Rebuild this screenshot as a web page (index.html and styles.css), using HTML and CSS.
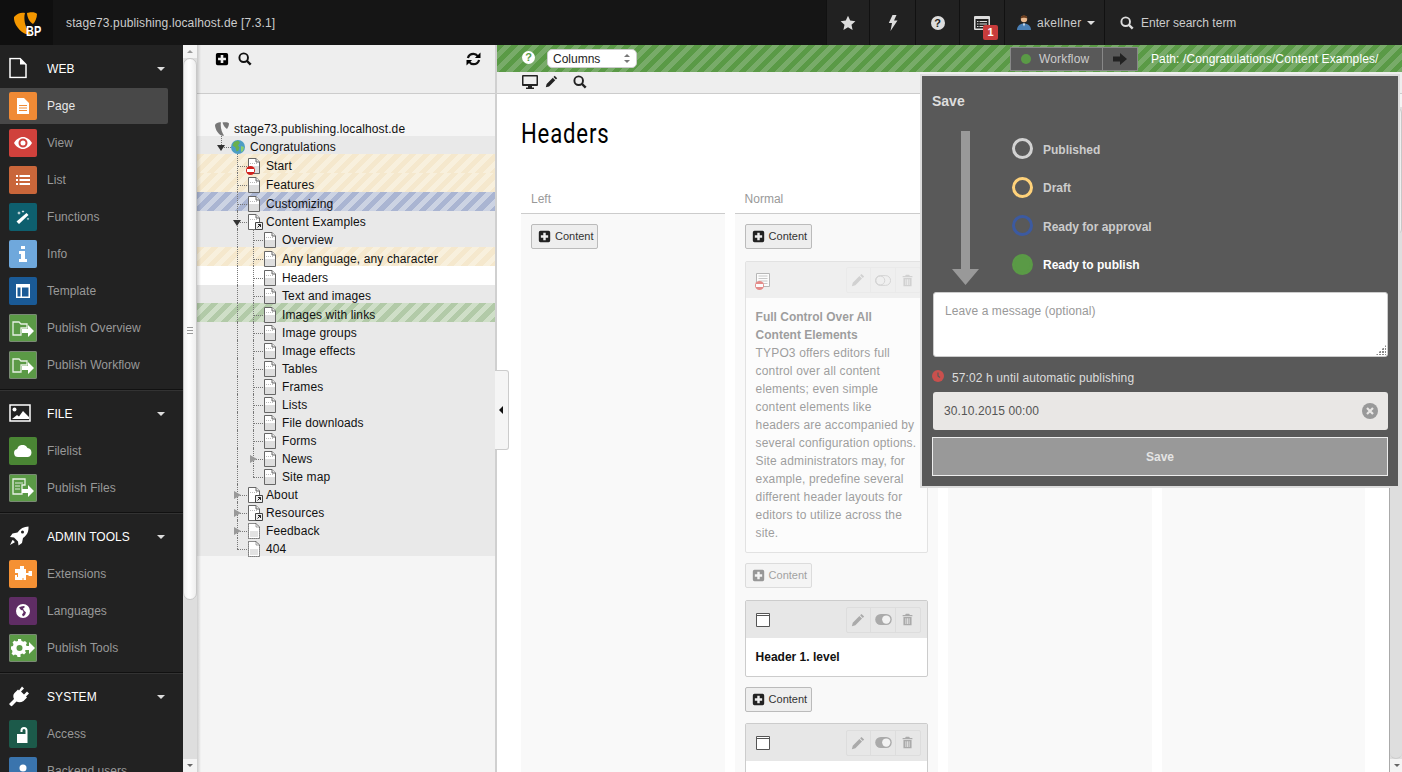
FILE: index.html
```html
<!DOCTYPE html>
<html lang="en">
<head>
  <meta charset="UTF-8">
  <title>TYPO3 publishing workflow</title>
  <link rel="stylesheet" href="styles.css">
</head>
<body>
  <!-- shared icons -->
  <svg class="defs" aria-hidden="true">
    <symbol id="i-plus" viewBox="0 0 16 16"><path fill-rule="evenodd" d="M3 1h10a2 2 0 012 2v10a2 2 0 01-2 2H3a2 2 0 01-2-2V3a2 2 0 012-2zM6.500 3.500v3h-3v3h3v3h3v-3h3v-3h-3v-3z"/></symbol>
    <symbol id="i-search" viewBox="0 0 16 16"><circle cx="6.500" cy="6.500" r="4.900" fill="none" stroke="currentColor" stroke-width="2.200"/><path d="M10 10l4.500 4.500" fill="none" stroke="currentColor" stroke-width="2.800"/></symbol>
    <symbol id="i-pencil" viewBox="0 0 16 16"><path d="M12 1l3 3-1.600 1.600-3-3zM9.600 3.400l3 3L5 14l-4 1 1-4z"/></symbol>
    <symbol id="i-trash" viewBox="0 0 16 16"><path fill-rule="evenodd" d="M6 1h4l1 1.500h3V4H2V2.500h3zM3 5h10v10H3zM5.500 6.500v7h1v-7zM7.500 6.500v7h1v-7zM9.500 6.500v7h1v-7z"/></symbol>
    <symbol id="i-toggle" viewBox="0 0 18 12"><rect x="0" y="0" width="18" height="12" rx="6"/><circle cx="12" cy="6" r="4.500" fill="#f2f2f2"/></symbol>
    <symbol id="i-toggle-off" viewBox="0 0 18 12"><rect x=".5" y=".5" width="17" height="11" rx="5.500" fill="none" stroke="currentColor"/><circle cx="6" cy="6" r="5" fill="none" stroke="currentColor"/></symbol>
    <symbol id="i-doc" viewBox="0 0 14 16"><path d="M1.500.5h7.500l3.500 3.500v11.500h-11z" fill="#fff" stroke="#666"/><path d="M2 8h10v7H2z" fill="#dedede"/><path d="M9 .5v3.500h3.500" fill="#eee" stroke="#666"/><path d="M3 5.500h8" stroke="#bbb" stroke-dasharray="1 1"/></symbol>
    <symbol id="i-doc-link" viewBox="0 0 16 16"><path d="M1.500.5h7.500l3.500 3.500v11.500h-11z" fill="#fff" stroke="#666"/><path d="M9 .5v3.500h3.500" fill="#eee" stroke="#666"/><path d="M3 5.500h8" stroke="#bbb" stroke-dasharray="1 1"/><path d="M8.500 8.500h7v7h-7z" fill="#eee" stroke="#444"/><path d="M10.500 13.500l3-3M11 10.500h2.500V13" fill="none" stroke="#222"/></symbol>
    <symbol id="i-doc-dotted" viewBox="0 0 14 16"><path d="M1.500.5h7.500l3.500 3.500v11.500h-11z" fill="#fff" stroke="#222" stroke-dasharray="1 1"/><path d="M3 8h8v6H3z" fill="#e2e2e2"/><path d="M9 .5v3.500h3.500" fill="none" stroke="#444" stroke-dasharray="1 1"/></symbol>
    <symbol id="i-publish" viewBox="0 0 28 28"><path d="M4 8h6l2 2h6v4h-6v7H4z" fill="none" stroke="#fff" stroke-width="1.300" opacity=".85"/><path d="M13 15h6v-4l6 6-6 6v-4h-6z" fill="#fff"/></symbol>
  </svg>

  <div class="app">
    <header class="topbar">
      <a class="logo">
        <svg class="logo-mark" viewBox="0 0 26 24" width="26" height="24"><path fill="#f49700" d="M0 5C3 1 8 0 11 1 9 8 12 18 17 22 11 25-1 14 0 5zM13 1c3-1 9-1 10 1 0 4-2 8-4 10-4-2-6-8-6-11z"/></svg>
        <span class="logo-text">BP</span>
      </a>
      <div class="site-name">stage73.publishing.localhost.de [7.3.1]</div>
      <nav class="toolbar">
        <a class="tool">
          <svg width="16" height="16" viewBox="0 0 16 16"><path fill="#ddd" d="M8 .8l2.200 4.800 5.200.6-3.900 3.500 1.100 5.200L8 12.300l-4.600 2.600 1.100-5.200L.6 6.200l5.200-.6z"/></svg>
        </a>
        <a class="tool">
          <svg width="10" height="16" viewBox="0 0 10 16"><path fill="#ddd" d="M4.500 0h4L6 5.500h3.500L2.500 16l1.500-8H.8z"/></svg>
        </a>
        <a class="tool"><span class="help">?</span></a>
        <a class="tool tool-notes">
          <svg width="16" height="14" viewBox="0 0 16 14"><path fill="#ddd" fill-rule="evenodd" d="M1 0h14a1 1 0 011 1v12a1 1 0 01-1 1H1a1 1 0 01-1-1V1a1 1 0 011-1zM1.500 3v9.500h13V3zM3 5h1.500v1H3zM5.500 5H13v1H5.500zM3 7.500h1.500v1H3zM5.500 7.500H13v1H5.500zM3 10h1.500v1H3zM5.500 10H13v1H5.500z"/></svg>
          <span class="badge">1</span>
        </a>
        <a class="tool tool-user">
          <svg width="14" height="16" viewBox="0 0 14 16"><circle cx="7" cy="4" r="3.200" fill="#e8b88f"/><path fill="#6b3d1e" d="M3.700 3.500C3.700 1 5.500.2 7 .2s3.300.8 3.300 3.300C9 2.500 5 2.500 3.700 3.500z"/><path fill="#4a7fb5" d="M0 15c0-4 3-6.500 7-6.500s7 2.500 7 6.500z"/><path fill="#fff" d="M6 8.500h2l-1 3z"/></svg>
          <span class="user-name">akellner</span>
          <i class="caret"></i>
        </a>
        <div class="search">
          <svg width="14" height="14" class="search-icon"><use href="#i-search"/></svg>
          <span>Enter search term</span>
        </div>
      </nav>
    </header>

    <div class="workspace">
      <aside class="modules">
        <section class="group">
          <div class="group-head">
            <svg class="group-icon" width="18" height="21" viewBox="0 0 18 21"><path d="M1 1h10l6 6v13H1z" fill="none" stroke="#fff" stroke-width="1.500"/><path d="M11 1v6h6" fill="#fff"/></svg>
            <span class="group-name">WEB</span><i class="caret"></i>
          </div>
          <a class="mod active">
            <span class="mod-icon c-page"><svg width="14" height="18" viewBox="0 0 14 18"><path fill="#fff" fill-rule="evenodd" d="M1 1h7l5 5v11H1zM3 8v1h8V8zM3 10.500v1h8v-1zM3 13v1h8v-1z"/></svg></span>Page
          </a>
          <a class="mod">
            <span class="mod-icon c-view"><svg width="18" height="12" viewBox="0 0 18 12"><path fill="#fff" fill-rule="evenodd" d="M0 6c2-3.500 5.500-6 9-6s7 2.500 9 6c-2 3.500-5.500 6-9 6S2 9.500 0 6zM9 1.500a4.500 4.500 0 100 9 4.500 4.500 0 000-9zM9 3.500a2.500 2.500 0 110 5 2.500 2.500 0 010-5z"/></svg></span>View
          </a>
          <a class="mod">
            <span class="mod-icon c-list"><svg width="14" height="10" viewBox="0 0 14 10"><path fill="#fff" d="M0 0h2v2H0zM3.500 0H14v2H3.500zM0 4h2v2H0zM3.500 4H14v2H3.500zM0 8h2v2H0zM3.500 8H14v2H3.500z"/></svg></span>List
          </a>
          <a class="mod">
            <span class="mod-icon c-func"><svg width="14" height="14" viewBox="0 0 14 14"><path fill="#fff" d="M10.500 3l2 2L3 14l-2.500-2.500zM3 1l.5 1.500L5 3l-1.500.5L3 5l-.5-1.500L1 3l1.500-.5zM7 0l.4 1L8.500 1.500 7.400 2 7 3l-.4-1L5.500 1.500 6.600 1zM12 7.500l.4 1 1 .4-1 .4-.4 1-.4-1-1-.4 1-.4z"/></svg></span>Functions
          </a>
          <a class="mod">
            <span class="mod-icon c-info"><svg width="8" height="16" viewBox="0 0 8 16"><path fill="#fff" d="M2 0h4v3H2zM0 5h6v8h2v3H0v-3h2V8H0z"/></svg></span>Info
          </a>
          <a class="mod">
            <span class="mod-icon c-template"><svg width="14" height="14" viewBox="0 0 14 14"><path fill="#fff" fill-rule="evenodd" d="M0 0h14v14H0zM1.500 3.500v9h3v-9zM6 3.500v9h6.500v-9z"/></svg></span>Template
          </a>
          <a class="mod">
            <span class="mod-icon c-publish"><svg width="28" height="28"><use href="#i-publish"/></svg></span>Publish Overview
          </a>
          <a class="mod">
            <span class="mod-icon c-publish"><svg width="28" height="28"><use href="#i-publish"/></svg></span>Publish Workflow
          </a>
        </section>

        <section class="group">
          <div class="group-head">
            <svg class="group-icon" width="22" height="18" viewBox="0 0 22 18"><path d="M1 1h20v16H1z" fill="none" stroke="#fff" stroke-width="1.500"/><circle cx="5.500" cy="5.500" r="2" fill="#fff"/><path d="M3 15l5-4 2 1.500L14 7l6 6v2z" fill="#fff"/></svg>
            <span class="group-name">FILE</span><i class="caret"></i>
          </div>
          <a class="mod">
            <span class="mod-icon c-filelist"><svg width="18" height="12" viewBox="0 0 18 12"><path fill="#fff" d="M4 12a4 4 0 01-.8-7.900A5.500 5.500 0 0113.500 3 4.600 4.600 0 0114 12z"/></svg></span>Filelist
          </a>
          <a class="mod">
            <span class="mod-icon c-publish"><svg width="28" height="28" viewBox="0 0 28 28"><path d="M4 5h12v6h-3v9H4z" fill="none" stroke="#fff" stroke-width="1.300" opacity=".85"/><path d="M6 9h8M6 12h5M6 15h5" stroke="#fff" opacity=".8"/><path d="M13 15h6v-4l6 6-6 6v-4h-6z" fill="#fff"/></svg></span>Publish Files
          </a>
        </section>

        <section class="group">
          <div class="group-head">
            <svg class="group-icon" width="20" height="20" viewBox="0 0 20 20"><path fill="#fff" fill-rule="evenodd" d="M19.500.5c.3 5-1.500 9-5.500 11.500l-1 5-3.500 2.500-.5-4-4-4-4-.5L3.500 7.500l5-1C11 2.500 15 .5 19.500.5zM13.500 4.500a1.500 1.500 0 100 3 1.500 1.500 0 000-3zM3.500 14c1 .3 2 1.300 2.300 2.300L1 19z"/></svg>
            <span class="group-name">ADMIN TOOLS</span><i class="caret"></i>
          </div>
          <a class="mod">
            <span class="mod-icon c-ext"><svg width="18" height="16" viewBox="0 0 18 16"><path fill="#fff" d="M6 3V0h4v3h2v4h2.500V5H18v5h-3.500V9H12v5h-2.500v-2h-1v2H1V9h2v2h1V7H1V3z"/></svg></span>Extensions
          </a>
          <a class="mod">
            <span class="mod-icon c-lang"><svg width="14" height="14" viewBox="0 0 14 14"><path fill="#fff" fill-rule="evenodd" d="M7 0a7 7 0 110 14A7 7 0 017 0zM3 3.500L5 6l2 .5.500 2-1.500 2 1 2 2-1.500 1-2.500-2-2-1-2 2-1.500-1-1-3 .5z"/></svg></span>Languages
          </a>
          <a class="mod">
            <span class="mod-icon c-publish"><svg width="24" height="20" viewBox="0 0 24 20"><path fill="#fff" fill-rule="evenodd" d="M7 1h3l.5 2 2 .8L14 3l2 2-1 1.500.5 1.500H18V4l6 6-6 6v-4h-3.500l-.5 1 1 1.500-2 2-1.500-1-2 .8L9.500 19h-3L6 17.300 4 16.500 2.500 17.500l-2-2 1-1.500L1 12l-1-.5v-3l2-.5.500-2L1.500 4.500l2-2L5 3.500 7 3zM8.500 7a3 3 0 100 6 3 3 0 000-6z"/></svg></span>Publish Tools
          </a>
        </section>

        <section class="group">
          <div class="group-head">
            <svg class="group-icon" width="21" height="21" viewBox="0 0 21 21"><path fill="#fff" d="M13 1l2 2-3 3 3 3 3-3 2 2-3 3 1 1-3.500 3.500C12 17 9.500 17 7.500 16L2.500 21 0 18.500l5-5C4 11.500 4 9 5.500 7.500L9 4l1 1z"/></svg>
            <span class="group-name">SYSTEM</span><i class="caret"></i>
          </div>
          <a class="mod">
            <span class="mod-icon c-access"><svg width="12" height="17" viewBox="0 0 12 17"><path fill="#fff" d="M0 8h10V4.500a1.500 1.500 0 10-3 0V6H5V4.500a3.500 3.500 0 017 0V8 17H0z" transform="translate(-1.500 0)"/></svg></span>Access
          </a>
          <a class="mod">
            <span class="mod-icon c-users"><svg width="14" height="14" viewBox="0 0 14 14"><circle cx="7" cy="4" r="3.500" fill="#fff"/><path fill="#fff" d="M0 14c0-4 3-6 7-6s7 2 7 6z"/></svg></span>Backend users
          </a>
        </section>
      </aside>

      <div class="scrollbar scrollbar-left">
        <span class="sb-up"></span>
        <span class="sb-thumb"><i class="grip"></i></span>
        <span class="sb-down"></span>
      </div>

      <section class="tree-pane">
        <div class="tree-tools">
          <svg width="14" height="14" class="tt"><use href="#i-plus"/></svg>
          <svg width="14" height="14" class="tt"><use href="#i-search"/></svg>
          <svg width="15" height="14" viewBox="0 0 16 15" class="tt tt-end"><path fill="none" stroke="#111" stroke-width="2.400" d="M2 6.500C2.800 3.500 5 2 8 2c2 0 3.500 1 4.500 2.500M14 8.500c-.8 3-3 4.500-6 4.500-2 0-3.500-1-4.500-2.500"/><path d="M15.500.5v6h-6zM.5 14.500v-6h6z"/></svg>
        </div>
        <div class="tree">
          <div class="row root">
            <svg class="page-icon" width="14" height="14" viewBox="0 0 14 14"><path fill="#777" d="M0 3C1 1 4 0 6 .5 5 5 7 11 9 13.500 5 15 0 8 0 3zM7.500.5c2-.5 6-.5 6.500 1 0 2-1 4-2 5.500-2-1-4-4.500-4.500-6.500z"/></svg>
            <span>stage73.publishing.localhost.de</span>
          </div>
          <div class="nodes">
            <div class="row">
              <span class="g stub"><i class="tog open"></i></span>
              <svg class="page-icon" width="14" height="14" viewBox="0 0 14 14"><circle cx="7" cy="7" r="7" fill="#4d9dc4"/><path fill="#6ab04c" d="M3 2l4-1.500 2 2-2 3 1.500 2-1 3-2 1-1-4-3-2z"/><path fill="#8ccf6e" d="M10 6l3 1-1 4-2 1z"/></svg>
              <span>Congratulations</span>
            </div>
            <div class="row tall orange"><span class="g tee"></span>
              <span class="icon-wrap"><svg class="page-icon" width="14" height="16"><use href="#i-doc"/></svg><i class="no-entry"></i></span><span>Start</span></div>
            <div class="row tall orange"><span class="g tee"></span><svg class="page-icon" width="14" height="16"><use href="#i-doc"/></svg><span>Features</span></div>
            <div class="row tall blue"><span class="g tee"></span><svg class="page-icon" width="14" height="16"><use href="#i-doc"/></svg><span>Customizing</span></div>
            <div class="row"><span class="g tee"><i class="tog open"></i></span><svg class="page-icon" width="16" height="16"><use href="#i-doc-link"/></svg><span class="after-link">Content Examples</span></div>
            <div class="row"><span class="g line"></span><span class="g tee"></span><svg class="page-icon" width="14" height="16"><use href="#i-doc"/></svg><span>Overview</span></div>
            <div class="row tall orange"><span class="g line"></span><span class="g tee"></span><svg class="page-icon" width="14" height="16"><use href="#i-doc"/></svg><span>Any language, any character</span></div>
            <div class="row tall current"><span class="g line"></span><span class="g tee"></span><svg class="page-icon" width="14" height="16"><use href="#i-doc"/></svg><span>Headers</span></div>
            <div class="row"><span class="g line"></span><span class="g tee"></span><svg class="page-icon" width="14" height="16"><use href="#i-doc"/></svg><span>Text and images</span></div>
            <div class="row tall green"><span class="g line"></span><span class="g tee"></span><svg class="page-icon" width="14" height="16"><use href="#i-doc"/></svg><span>Images with links</span></div>
            <div class="row"><span class="g line"></span><span class="g tee"></span><svg class="page-icon" width="14" height="16"><use href="#i-doc"/></svg><span>Image groups</span></div>
            <div class="row"><span class="g line"></span><span class="g tee"></span><svg class="page-icon" width="14" height="16"><use href="#i-doc"/></svg><span>Image effects</span></div>
            <div class="row"><span class="g line"></span><span class="g tee"></span><svg class="page-icon" width="14" height="16"><use href="#i-doc"/></svg><span>Tables</span></div>
            <div class="row"><span class="g line"></span><span class="g tee"></span><svg class="page-icon" width="14" height="16"><use href="#i-doc"/></svg><span>Frames</span></div>
            <div class="row"><span class="g line"></span><span class="g tee"></span><svg class="page-icon" width="14" height="16"><use href="#i-doc"/></svg><span>Lists</span></div>
            <div class="row"><span class="g line"></span><span class="g tee"></span><svg class="page-icon" width="14" height="16"><use href="#i-doc"/></svg><span>File downloads</span></div>
            <div class="row"><span class="g line"></span><span class="g tee"></span><svg class="page-icon" width="14" height="16"><use href="#i-doc"/></svg><span>Forms</span></div>
            <div class="row"><span class="g line"></span><span class="g tee"><i class="tog"></i></span><svg class="page-icon" width="14" height="16"><use href="#i-doc"/></svg><span>News</span></div>
            <div class="row"><span class="g line"></span><span class="g end"></span><svg class="page-icon" width="14" height="16"><use href="#i-doc"/></svg><span>Site map</span></div>
            <div class="row"><span class="g tee"><i class="tog"></i></span><svg class="page-icon" width="16" height="16"><use href="#i-doc-link"/></svg><span class="after-link">About</span></div>
            <div class="row"><span class="g tee"><i class="tog"></i></span><svg class="page-icon" width="16" height="16"><use href="#i-doc-link"/></svg><span class="after-link">Resources</span></div>
            <div class="row"><span class="g tee"><i class="tog"></i></span><svg class="page-icon" width="14" height="16"><use href="#i-doc-dotted"/></svg><span>Feedback</span></div>
            <div class="row"><span class="g end"></span><svg class="page-icon" width="14" height="16"><use href="#i-doc-dotted"/></svg><span>404</span></div>
          </div>
        </div>
        <div class="collapse-handle"><i></i></div>
      </section>

      <main class="content">
        <div class="workflow-bar">
          <span class="help help-small">?</span>
          <div class="select"><span>Columns</span><i class="spin"></i></div>
          <div class="wf-right">
            <div class="wf-button">
              <span class="wf-label"><i class="dot"></i>Workflow</span>
              <span class="wf-arrow"><svg width="14" height="12" viewBox="0 0 14 12"><path fill="#222" d="M0 3.500h7V0l7 6-7 6V8.500H0z"/></svg></span>
            </div>
            <div class="wf-path">Path: /Congratulations/Content Examples/</div>
          </div>
        </div>
        <div class="doc-tools">
          <svg width="16" height="14" viewBox="0 0 16 14"><path fill="#222" fill-rule="evenodd" d="M1 0h14a1 1 0 011 1v9a1 1 0 01-1 1h-5v1.500h2V14H4v-1.500h2V11H1a1 1 0 01-1-1V1a1 1 0 011-1zM1.500 1.500v7.500h13V1.500z"/></svg>
          <svg width="13" height="13" class="dt-pencil"><use href="#i-pencil"/></svg>
          <svg width="14" height="14" class="dt-search"><use href="#i-search"/></svg>
        </div>

        <div class="doc-body">
          <div class="doc">
            <h1>Headers</h1>
            <div class="columns">
              <div class="col">
                <div class="col-title">Left</div>
                <div class="col-body">
                  <a class="btn"><svg width="13" height="13"><use href="#i-plus"/></svg>Content</a>
                </div>
              </div>
              <div class="col">
                <div class="col-title">Normal</div>
                <div class="col-body">
                  <a class="btn"><svg width="13" height="13"><use href="#i-plus"/></svg>Content</a>
                  <article class="card is-hidden">
                    <div class="card-head">
                      <span class="icon-wrap ce-icon">
                        <svg width="14" height="14" viewBox="0 0 14 14"><path d="M.5.5h13v13H.5z" fill="#fff" stroke="#777"/><path d="M2.500 3h9M2.500 5.500h9M2.500 8h9M2.500 10.500h9" stroke="#999"/></svg>
                        <i class="no-entry"></i>
                      </span>
                      <div class="actions">
                        <span class="act"><svg width="14" height="14"><use href="#i-pencil"/></svg></span>
                        <span class="act"><svg width="16" height="11"><use href="#i-toggle-off"/></svg></span>
                        <span class="act"><svg width="13" height="13"><use href="#i-trash"/></svg></span>
                      </div>
                    </div>
                    <div class="card-body">
                      <strong>Full Control Over All<br>Content Elements</strong><br>
                      TYPO3 offers editors full<br>control over all content<br>elements; even simple<br>content elements like<br>headers are accompanied by<br>several configuration options.<br>Site administrators may, for<br>example, predefine several<br>different header layouts for<br>editors to utilize across the<br>site.
                    </div>
                  </article>
                  <a class="btn is-faded"><svg width="13" height="13"><use href="#i-plus"/></svg>Content</a>
                  <article class="card">
                    <div class="card-head">
                      <svg class="ce-icon" width="14" height="14" viewBox="0 0 14 14"><path d="M.5.5h13v13H.5z" fill="#fff" stroke="#555"/><path d="M1 2.500h12" stroke="#555"/></svg>
                      <div class="actions">
                        <span class="act"><svg width="14" height="14"><use href="#i-pencil"/></svg></span>
                        <span class="act"><svg width="17" height="11"><use href="#i-toggle"/></svg></span>
                        <span class="act"><svg width="13" height="13"><use href="#i-trash"/></svg></span>
                      </div>
                    </div>
                    <div class="card-body"><strong class="dark">Header 1. level</strong></div>
                  </article>
                  <a class="btn"><svg width="13" height="13"><use href="#i-plus"/></svg>Content</a>
                  <article class="card card-last">
                    <div class="card-head">
                      <svg class="ce-icon" width="14" height="14" viewBox="0 0 14 14"><path d="M.5.5h13v13H.5z" fill="#fff" stroke="#555"/><path d="M1 2.500h12" stroke="#555"/></svg>
                      <div class="actions">
                        <span class="act"><svg width="14" height="14"><use href="#i-pencil"/></svg></span>
                        <span class="act"><svg width="17" height="11"><use href="#i-toggle"/></svg></span>
                        <span class="act"><svg width="13" height="13"><use href="#i-trash"/></svg></span>
                      </div>
                    </div>
                    <div class="card-body">&nbsp;</div>
                  </article>
                </div>
              </div>
              <div class="col"><div class="col-title">&nbsp;</div><div class="col-body"></div></div>
              <div class="col"><div class="col-title">&nbsp;</div><div class="col-body"></div></div>
            </div>
          </div>
          <div class="scrollbar scrollbar-right">
            <span class="sb-up"></span>
            <span class="sb-thumb"></span>
            <span class="sb-rest"></span>
            <span class="sb-down"></span>
          </div>
        </div>

        <!-- workflow popup, lies over the columns -->
        <div class="save-panel">
          <h2>Save</h2>
          <div class="states">
            <svg class="state-arrow" width="27" height="154" viewBox="0 0 27 154"><path fill="#999" d="M9 0h9v138h9l-13.500 16L0 138h9z"/></svg>
            <ul class="state-list">
              <li><i class="ring ring-published"></i>Published</li>
              <li><i class="ring ring-draft"></i>Draft</li>
              <li><i class="ring ring-approval"></i>Ready for approval</li>
              <li class="is-now"><i class="ring ring-ready"></i>Ready to publish</li>
            </ul>
          </div>
          <div class="message">Leave a message (optional)<i class="resize"></i></div>
          <div class="countdown">
            <svg width="12" height="12" viewBox="0 0 12 12"><circle cx="6" cy="6" r="6" fill="#c9504d"/><path d="M6 2.500V6l2 1.500" fill="none" stroke="#5a5a5a" stroke-width="1.200"/></svg>
            <span>57:02 h until automatic publishing</span>
          </div>
          <div class="date-field">
            <span>30.10.2015 00:00</span>
            <svg width="16" height="16" viewBox="0 0 16 16"><circle cx="8" cy="8" r="8" fill="#999"/><path d="M5 5l6 6M11 5l-6 6" stroke="#e9e7e5" stroke-width="2.200"/></svg>
          </div>
          <button class="save-btn">Save</button>
        </div>
      </main>
    </div>
  </div>
</body>
</html>
```

FILE: styles.css
```css
* {
  box-sizing: border-box;
}
html, body {
  margin: 0;
  padding: 0;
  height: 100%;
  overflow: hidden;
}
body {
  font-family: "Liberation Sans", Arial, sans-serif;
  font-size: 12px;
  color: #111;
  background: #fff;
}
svg {
  display: block;
  flex: none;
}
.defs {
  display: none;
}
.app {
  width: 1402px;
  height: 772px;
  display: flex;
  flex-direction: column;
  overflow: hidden;
}

/* top bar */
.topbar {
  height: 45px;
  flex: none;
  display: flex;
  align-items: center;
  background: #151515;
  color: #ccc;
}
.logo {
  width: 53px;
  height: 45px;
  flex: none;
  position: relative;
  background: #0f0f0f;
  padding: 12px 0 0 14px;
}
.logo-text {
  position: absolute;
  left: 26px;
  top: 24px;
  font-size: 14px;
  line-height: 14px;
  font-weight: 700;
  color: #fff;
  transform: scaleX(.78);
  transform-origin: left center;
}
.site-name {
  padding-left: 13px;
  flex: 1;
  letter-spacing: .13px;
}
.toolbar {
  width: 576px;
  height: 45px;
  flex: none;
  display: flex;
  background: #212121;
}
.tool {
  width: 44px;
  display: flex;
  align-items: center;
  justify-content: center;
  border-left: 1px solid #111;
  position: relative;
}
.tool:first-child {
  width: 43px;
}
.tool:nth-child(2) {
  width: 46px;
}
.tool-user {
  width: 101px;
  gap: 6px;
  border-right: 1px solid #111;
  justify-content: flex-start;
  padding-left: 12px;
  color: #ccc;
}
.user-name {
  letter-spacing: .3px;
}
.tool-user .caret {
  margin: 0;
}
.tool-notes {
  width: 45px;
}
.badge {
  position: absolute;
  left: 23px;
  top: 25px;
  width: 15px;
  height: 15px;
  border-radius: 2px;
  background: #c83c3c;
  color: #fff;
  font-size: 11px;
  line-height: 15px;
  font-weight: 700;
  text-align: center;
}
.help {
  display: block;
  width: 14px;
  height: 14px;
  border-radius: 50%;
  background: #ddd;
  color: #212121;
  font-size: 11px;
  line-height: 14px;
  font-weight: 700;
  text-align: center;
}
.caret {
  display: block;
  width: 0;
  height: 0;
  border-left: 4px solid transparent;
  border-right: 4px solid transparent;
  border-top: 4px solid #ddd;
}
.search {
  display: flex;
  align-items: center;
  padding-left: 15px;
  color: #ccc;
  flex: 1;
}
.search-icon {
  color: #ddd;
  margin-right: 7px;
}

/* page under the bar */
.workspace {
  flex: 1;
  display: flex;
  min-height: 0;
}

/* module menu */
.modules {
  width: 183px;
  flex: none;
  background: #222;
  padding-top: 1px;
  overflow: hidden;
  letter-spacing: .06px;
}
.group {
  padding-bottom: 5px;
  border-bottom: 1px solid #111;
  box-shadow: 0 1px 0 #333;
  margin-bottom: 1px;
}
.group-head {
  height: 42px;
  display: flex;
  align-items: center;
  padding: 4px 18px 0 0;
  color: #fff;
  position: relative;
}
.group-icon {
  position: absolute;
  left: 9px;
  top: calc(50% + 1px);
  transform: translateY(-50%);
}
.group-name {
  margin-left: 47px;
  flex: 1;
}
.mod {
  height: 36px;
  margin-bottom: 1px;
  width: 168px;
  display: flex;
  align-items: center;
  padding-left: 9px;
  color: #999;
  border-radius: 0 2px 2px 0;
}
.mod.active {
  background: #484848;
  color: #e8e8e8;
}
.mod-icon {
  width: 28px;
  height: 28px;
  margin-right: 10px;
  border-radius: 2px;
  display: flex;
  align-items: center;
  justify-content: center;
  flex: none;
}
.c-page { background: #f08a35; }
.c-view { background: #d0413c; }
.c-list { background: #c9663a; }
.c-func { background: #0e5f6e; }
.c-info { background: #6fa8dc; }
.c-template { background: #1a5a96; }
.c-publish { background: #5b9a46; box-shadow: inset 0 0 0 1px #7a8a75; }
.c-filelist { background: #4a8534; }
.c-ext { background: #f59134; }
.c-lang { background: #5f2d64; }
.c-access { background: #1c5a4a; }
.c-users { background: #3a74ad; }

/* scrollbars */
.scrollbar {
  width: 14px;
  flex: none;
  background: #dedede;
  display: flex;
  flex-direction: column;
}
.sb-up, .sb-down {
  height: 13px;
  flex: none;
  background: #f4f4f4;
  position: relative;
}
.sb-up::after, .sb-down::after {
  content: "";
  position: absolute;
  left: 4px;
  top: 5px;
  border-left: 3px solid transparent;
  border-right: 3px solid transparent;
}
.sb-up::after {
  border-bottom: 3px solid #999;
}
.sb-down::after {
  border-top: 3px solid #666;
}
.sb-thumb {
  background: linear-gradient(90deg, #f2f2f2, #fff 40%, #eee);
  border: 1px solid #c8c8c8;
  border-radius: 7px;
  position: relative;
}
.scrollbar-left {
  position: relative;
}
.scrollbar-left .sb-thumb {
  height: 542px;
  flex: none;
}
.scrollbar-left .sb-down {
  position: absolute;
  left: 0;
  right: 0;
  bottom: 0;
}
.grip {
  position: absolute;
  left: 3px;
  top: 268px;
  width: 6px;
  height: 8px;
  background: repeating-linear-gradient(180deg, #999 0, #999 1px, transparent 1px, transparent 3px);
}
.scrollbar-right {
  width: 13px;
  border-left: 1px solid #aaa;
}
.scrollbar-right .sb-thumb {
  height: 128px;
  flex: none;
}
.sb-rest {
  flex: 1;
  border-bottom: 1px solid #ccc;
  border-radius: 0 0 7px 7px;
}

/* page tree */
.tree-pane {
  width: 300px;
  flex: none;
  display: flex;
  flex-direction: column;
  position: relative;
  background: #f5f5f5;
  border-right: 2px solid #d0d0d0;
  z-index: 2;
}
.tree-pane::before {
  content: "";
  position: absolute;
  left: 0;
  top: 0;
  bottom: 0;
  width: 4px;
  background: linear-gradient(90deg, rgba(0, 0, 0, .16), transparent);
}
.tree-tools {
  height: 49px;
  flex: none;
  display: flex;
  align-items: flex-start;
  gap: 9px;
  padding: 7px 14px 0 18px;
  background: #eee;
  border-bottom: 1px solid #ccc;
}
.tt-end {
  margin-left: auto;
}
.tree {
  padding-top: 24px;
  letter-spacing: .12px;
}
.nodes {
  background: #e9e9e9;
}
.row {
  height: 18px;
  display: flex;
  align-items: center;
  padding: 4px 0 0 16px;
  white-space: nowrap;
}
.row.tall {
  height: 19px;
}
.row.orange {
  background: repeating-linear-gradient(135deg, #f5e8cd 0, #f5e8cd 5px, #f8f0dd 5px, #f8f0dd 10px);
}
.row.blue {
  background: repeating-linear-gradient(135deg, #aab5d2 0, #aab5d2 5px, #ccd3e3 5px, #ccd3e3 10px);
}
.row.green {
  background: repeating-linear-gradient(135deg, #b2caa8 0, #b2caa8 5px, #cfdfc8 5px, #cfdfc8 10px);
}
.row.current {
  background: #fff;
}
.page-icon {
  margin-left: 2px;
  margin-right: 5px;
}
.after-link {
  margin-left: -2px;
}
.icon-wrap {
  position: relative;
  display: block;
}
.no-entry {
  position: absolute;
  left: 1px;
  bottom: -1px;
  width: 9px;
  height: 9px;
  border-radius: 50%;
  background: #d0201c;
}
.no-entry::after {
  content: "";
  position: absolute;
  left: 1px;
  right: 1px;
  top: 3px;
  height: 3px;
  background: #fff;
}
.g {
  width: 16px;
  height: 100%;
  flex: none;
  position: relative;
}
.row .g:first-child {
  margin-left: 16px;
}
.row:first-child .g:first-child {
  margin-left: 0;
}
.g::before {
  content: "";
  position: absolute;
  left: 8px;
  top: -4px;
  bottom: 0;
  border-left: 1px dotted #777;
}
.g::after {
  content: "";
  position: absolute;
  left: 8px;
  right: -2px;
  top: 50%;
  border-top: 1px dotted #777;
}
.line::after {
  display: none;
}
.end::before {
  bottom: 50%;
}
.stub::before {
  bottom: 50%;
}
.tog {
  position: absolute;
  left: 5px;
  top: 50%;
  margin-top: -4px;
  z-index: 1;
  border-top: 4px solid transparent;
  border-bottom: 4px solid transparent;
  border-left: 7px solid #999;
}
.tog.open {
  left: 4px;
  margin-top: -2px;
  border-left: 4px solid transparent;
  border-right: 4px solid transparent;
  border-top: 6px solid #333;
  border-bottom: 0;
}
.collapse-handle {
  position: absolute;
  left: 298px;
  top: 325px;
  width: 14px;
  height: 80px;
  background: #f5f5f5;
  border: 1px solid #ccc;
  border-left: 0;
  border-radius: 0 3px 3px 0;
}
.collapse-handle i {
  position: absolute;
  left: 4px;
  top: 35px;
  border-top: 4px solid transparent;
  border-bottom: 4px solid transparent;
  border-right: 4px solid #111;
}

/* content */
.content {
  flex: 1;
  min-width: 0;
  position: relative;
  display: flex;
  flex-direction: column;
}
.workflow-bar {
  height: 27px;
  flex: none;
  display: flex;
  align-items: center;
  padding-left: 25px;
  color: #fff;
  background: repeating-linear-gradient(135deg, #5a9a46 0, #5a9a46 5px, #78ab69 5px, #78ab69 10px);
}
.help-small {
  width: 13px;
  height: 13px;
  margin-top: -3px;
  background: #fff;
  color: #5a9a46;
  line-height: 13px;
}
.select {
  width: 90px;
  height: 19px;
  margin: 0 0 0 12px;
  padding-left: 5px;
  display: flex;
  align-items: center;
  justify-content: space-between;
  background: #fff;
  border: 1px solid #ccc;
  border-radius: 5px;
  color: #222;
}
.spin {
  display: flex;
  flex-direction: column;
  gap: 3px;
  margin-right: 6px;
}
.spin::before, .spin::after {
  content: "";
  border-left: 3px solid transparent;
  border-right: 3px solid transparent;
}
.spin::before {
  border-bottom: 3px solid #777;
}
.spin::after {
  border-top: 3px solid #777;
}
.wf-right {
  margin-left: auto;
  display: flex;
  align-items: center;
}
.wf-button {
  display: flex;
  height: 24px;
  background: #595959;
  border: 1px solid #888;
  color: #ccc;
}
.wf-label {
  width: 92px;
  display: flex;
  align-items: center;
  padding-left: 10px;
  gap: 8px;
  border-right: 1px solid #888;
  letter-spacing: .15px;
}
.dot {
  width: 10px;
  height: 10px;
  border-radius: 50%;
  background: #5a9a46;
}
.wf-arrow {
  width: 34px;
  display: flex;
  align-items: center;
  justify-content: center;
}
.wf-path {
  width: 264px;
  padding-left: 13px;
  color: #fff;
  white-space: nowrap;
  letter-spacing: .1px;
}
.doc-tools {
  height: 22px;
  flex: none;
  display: flex;
  align-items: center;
  padding: 0 0 2px 25px;
  background: #eee;
  border-bottom: 1px solid #ccc;
  color: #222;
}
.dt-pencil {
  margin-left: 7px;
  fill: #222;
}
.dt-search {
  margin-left: 15px;
}
.doc-body {
  flex: 1;
  min-height: 0;
  display: flex;
}
.doc {
  flex: 1;
  min-width: 0;
  padding: 25px 0 0 24px;
  overflow: hidden;
}
h1 {
  margin: 0 0 36px;
  font-family: "Roboto", sans-serif;
  font-size: 27px;
  line-height: 30px;
  font-weight: 400;
  color: #000;
  letter-spacing: 1px;
  transform: scaleX(.82);
  transform-origin: left center;
}
.columns {
  display: grid;
  grid-template-columns: repeat(4, 203.6px);
  column-gap: 10px;
}
.col-title {
  height: 29px;
  line-height: 28px;
  padding-left: 10px;
  color: #999;
  border-bottom: 1px solid #ccc;
}
.col-body {
  min-height: 600px;
  padding: 10px;
  background: #f9f9f9;
}
.btn {
  width: 67px;
  height: 25px;
  display: flex;
  align-items: center;
  gap: 4px;
  padding: 0 0 1px 6px;
  font-size: 11px;
  color: #333;
  background: #eee;
  border: 1px solid #bbb;
  border-radius: 2px;
}
.btn svg {
  fill: #222;
}
.btn.is-faded {
  opacity: .45;
}
.card {
  width: 183px;
  margin: 12px 0 10px;
  background: #fff;
  border: 1px solid #ccc;
  border-radius: 2px;
}
.card-last {
  margin-top: 11px;
}
.card.is-hidden {
  opacity: .5;
}
.card-head {
  height: 37px;
  display: flex;
  align-items: center;
  padding: 0 6px 0 10px;
  background: #e7e7e7;
}
.ce-icon {
  display: block;
}
.is-hidden .card-head {
  height: 36px;
}
.is-hidden .no-entry {
  left: -1px;
  bottom: -3px;
}
.actions {
  margin-left: auto;
  display: flex;
  width: 75px;
  height: 26px;
  border: 1px solid #ddd;
  border-radius: 2px;
}
.act {
  flex: 1;
  display: flex;
  align-items: center;
  justify-content: center;
  fill: #aaa;
  color: #aaa;
}
.act + .act {
  border-left: 1px solid #ddd;
}
.card-body {
  padding: 10px;
  line-height: 18px;
  color: #444;
  white-space: nowrap;
  letter-spacing: .15px;
}
.card-body strong {
  letter-spacing: 0;
}
.dark {
  color: #111;
}

/* workflow popup */
.save-panel {
  position: absolute;
  left: 423px;
  top: 29px;
  width: 480px;
  height: 414px;
  padding: 16px 9px 0 10px;
  background: #595959;
  border: 2px solid #ddd;
  color: #ddd;
  z-index: 3;
}
h2 {
  margin: 0;
  font-size: 14px;
  line-height: 18px;
  color: #ddd;
}
.states {
  display: flex;
  margin-top: 21px;
  height: 161px;
}
.state-arrow {
  margin: 0 0 0 20px;
}
.state-list {
  list-style: none;
  margin: 7px 0 0 33px;
  padding: 0;
  font-weight: 700;
  color: #ccc;
}
.state-list li {
  height: 38.500px;
  display: flex;
  align-items: center;
  padding-bottom: 15px;
}
.state-list .is-now {
  color: #fff;
}
.ring {
  width: 21px;
  height: 21px;
  margin-right: 10px;
  border-radius: 50%;
  border: 3px solid #d2d2d2;
  flex: none;
  position: relative;
  top: -1px;
}
.ring-draft { border-color: #ffd27a; }
.ring-approval { border-color: #3c5aa0; }
.ring-ready { border-color: #5a9a46; background: #5a9a46; }
.message {
  height: 65px;
  margin: 0 1px;
  padding: 11px;
  background: #fff;
  border-radius: 3px;
  border: 1px solid #ccc;
  color: #999;
  position: relative;
  letter-spacing: .1px;
}
.resize {
  position: absolute;
  right: 1px;
  bottom: 1px;
  width: 10px;
  height: 10px;
  background: radial-gradient(circle at 1px 1px, #888 1px, transparent 1px) 0 0 / 3px 3px;
  clip-path: polygon(100% 0, 100% 100%, 0 100%);
}
.countdown {
  display: flex;
  align-items: center;
  gap: 8px;
  height: 35px;
  padding-top: 7px;
  color: #ddd;
  letter-spacing: .12px;
}
.countdown svg {
  margin-top: -4px;
}
.date-field {
  height: 38px;
  margin: 0 1px;
  padding: 0 10px 0 11px;
  display: flex;
  align-items: center;
  justify-content: space-between;
  background: #e9e7e5;
  border-radius: 3px;
  color: #555;
  letter-spacing: .1px;
}
.save-btn {
  display: block;
  width: 456px;
  height: 39px;
  margin-top: 7px;
  padding: 0;
  font: 700 12px "Liberation Sans", Arial, sans-serif;
  color: #e4e4e4;
  background: #999;
  border: 1px solid #eee;
}
```
